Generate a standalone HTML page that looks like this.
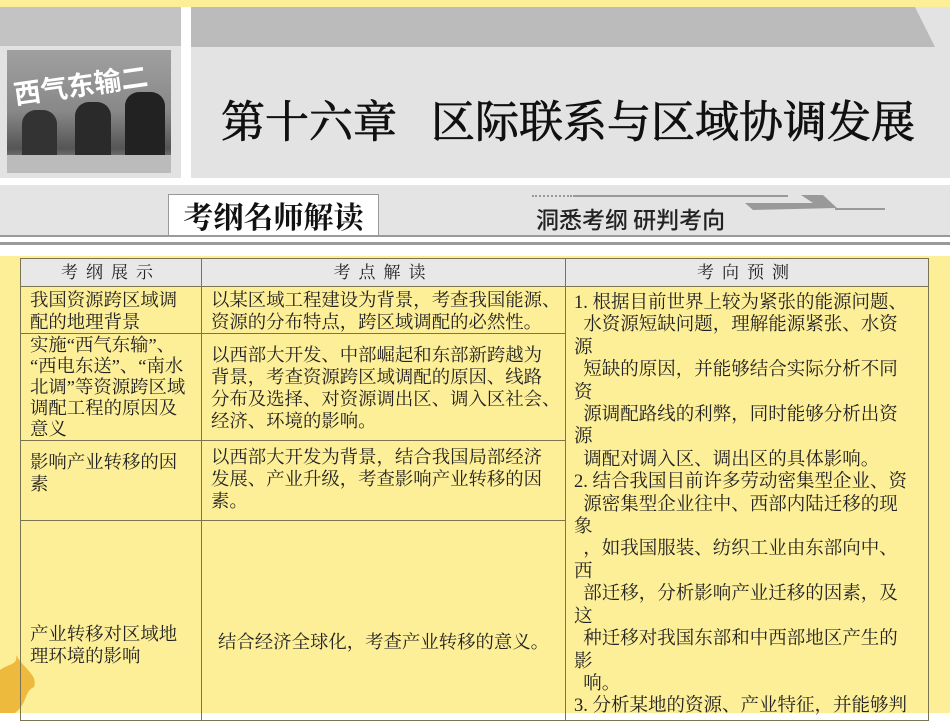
<!DOCTYPE html>
<html><head><meta charset="utf-8"><style>
body{margin:0;width:950px;height:713px;overflow:hidden;background:#fff;position:relative;font-family:"Liberation Serif","Noto Serif CJK SC",serif}
.a{position:absolute}
td{border:1px solid #7a7450;vertical-align:top;padding:0 9px;font-size:18.4px;line-height:22px;color:#222;overflow:visible;white-space:nowrap}
</style></head><body>
<div class="a" style="left:0;top:0;width:950px;height:7px;background:#fdee98"></div>
<div class="a" style="left:0;top:7px;width:181px;height:171px;background:#e2e2e2"></div>
<div class="a" style="left:0;top:7px;width:181px;height:39px;background:#c3c3c3"></div>
<div class="a" style="left:191px;top:7px;width:759px;height:171px;background:#e3e3e3"></div>
<div class="a" style="left:191px;top:7px;width:759px;height:40px;background:#bbb"></div>
<svg class="a" style="left:915px;top:7px" width="35" height="40"><polygon points="0,0 35,0 35,40 20,40" fill="#e3e3e3"/></svg>
<div class="a" style="left:7px;top:50px;width:164px;height:123px;background:linear-gradient(#a0a0a0,#888 50%,#555 80%,#aaa);overflow:hidden">
<div class="a" style="left:6px;top:14px;color:#fff;font:bold 27px 'Noto Sans CJK SC',sans-serif;transform:rotate(-8deg)">西气东输二</div>
<div class="a" style="left:15px;top:60px;width:35px;height:50px;background:#333;border-radius:14px 14px 0 0"></div>
<div class="a" style="left:68px;top:52px;width:36px;height:58px;background:#2a2a2a;border-radius:14px 14px 0 0"></div>
<div class="a" style="left:118px;top:42px;width:40px;height:68px;background:#222;border-radius:14px 14px 0 0"></div>
<div class="a" style="left:0;top:105px;width:164px;height:18px;background:#bbb"></div>
</div>
<div class="a" style="left:221px;top:86px;font:44px 'Noto Serif CJK SC',serif;color:#111;white-space:nowrap;-webkit-text-stroke:0.8px #111">第十六章<span style="display:inline-block;width:34px"></span>区际联系与区域协调发展</div>
<div class="a" style="left:0;top:185px;width:950px;height:50px;background:#e4e4e4;border-bottom:2px solid #9a9a9a"></div>
<div class="a" style="left:168px;top:194px;width:209px;height:40px;background:#fff;border:1px solid #999;font:bold 30px 'Noto Serif CJK SC',serif;color:#111;text-align:center;line-height:40px">考纲名师解读</div>
<div class="a" style="left:532px;top:195px;width:40px;height:0;border-top:2px dotted #999"></div>
<div class="a" style="left:573px;top:195px;width:215px;height:2px;background:#999"></div>
<svg class="a" style="left:745px;top:195px" width="140" height="18"><polygon points="0,8 68,8 56,0 78,0 92,13 8,15" fill="#999"/><rect x="90" y="13" width="50" height="2" fill="#999"/></svg>
<div class="a" style="left:536px;top:201px;font:500 23px 'Noto Sans CJK SC',sans-serif;color:#222;white-space:nowrap">洞悉考纲 研判考向</div>
<div class="a" style="left:0;top:242px;width:950px;height:3px;background:#9a9a9a"></div>
<div class="a" style="left:0;top:256px;width:950px;height:457px;background:#fdee98"></div>
<svg class="a" style="left:0;top:655px" width="45" height="58"><path d="M0,15 C10,8 18,10 16,0 C25,15 38,20 34,32 C24,36 28,48 15,58 L0,58Z" fill="#e8a820" opacity=".75"/></svg>
<table class="a" style="left:20px;top:258px;border-collapse:collapse;width:908px;table-layout:fixed">
<colgroup><col style="width:181px"><col style="width:364px"><col style="width:363px"></colgroup>
<tr style="height:28px;background:#e8e8e8"><td style="text-align:center;letter-spacing:8px;vertical-align:middle;font-size:17px">考纲展示</td><td style="text-align:center;letter-spacing:8px;vertical-align:middle;font-size:17px">考点解读</td><td style="text-align:center;letter-spacing:8px;vertical-align:middle;font-size:17px">考向预测</td></tr>
<tr style="height:47px"><td style="padding-top:2px">我国资源跨区域调<br>配的地理背景</td><td style="padding-top:2px">以某区域工程建设为背景，考查我国能源、<br>资源的分布特点，跨区域调配的必然性。</td>
<td rowspan="4" style="padding:5px 8px 0 8px;line-height:22.4px;font-size:18.5px">1. 根据目前世界上较为紧张的能源问题、<br>&nbsp;&nbsp;水资源短缺问题，理解能源紧张、水资<br>源<br>&nbsp;&nbsp;短缺的原因，并能够结合实际分析不同<br>资<br>&nbsp;&nbsp;源调配路线的利弊，同时能够分析出资<br>源<br>&nbsp;&nbsp;调配对调入区、调出区的具体影响。<br>2. 结合我国目前许多劳动密集型企业、资<br>&nbsp;&nbsp;源密集型企业往中、西部内陆迁移的现<br>象<br>&nbsp;&nbsp;，如我国服装、纺织工业由东部向中、<br>西<br>&nbsp;&nbsp;部迁移，分析影响产业迁移的因素，及<br>这<br>&nbsp;&nbsp;种迁移对我国东部和中西部地区产生的<br>影<br>&nbsp;&nbsp;响。<br>3. 分析某地的资源、产业特征，并能够判</td></tr>
<tr style="height:104px"><td style="line-height:21px;padding-top:1px">实施“西气东输”、<br>“西电东送”、“南水<br>北调”等资源跨区域<br>调配工程的原因及<br>意义</td><td style="padding-top:10px">以西部大开发、中部崛起和东部新跨越为<br>背景，考查资源跨区域调配的原因、线路<br>分布及选择、对资源调出区、调入区社会、<br>经济、环境的影响。</td></tr>
<tr style="height:80px"><td style="padding-top:10px">影响产业转移的因<br>素</td><td style="padding-top:5px">以西部大开发为背景，结合我国局部经济<br>发展、产业升级，考查影响产业转移的因<br>素。</td></tr>
<tr style="height:200px"><td style="padding-top:102px">产业转移对区域地<br>理环境的影响</td><td style="padding-top:110px;padding-left:16px">结合经济全球化，考查产业转移的意义。</td></tr>
</table>
</body></html>
